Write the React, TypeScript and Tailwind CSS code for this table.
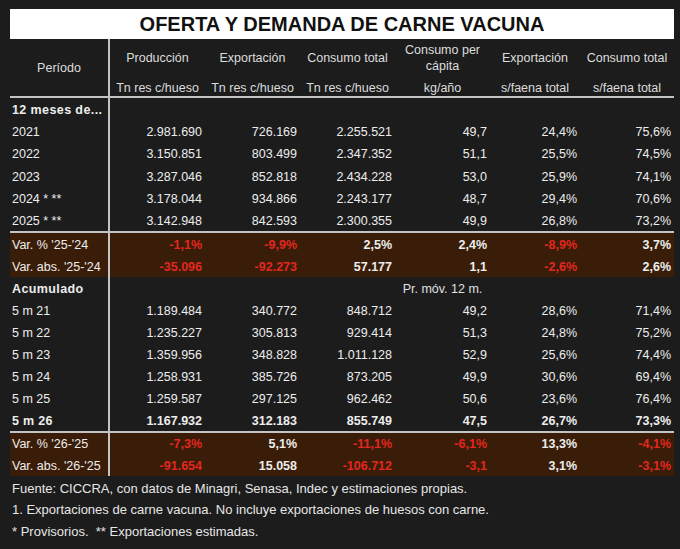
const FONT = { fontFamily: '"Liberation Sans", Arial, sans-serif' };

type Cell = { v: string; red?: boolean };
type Row = { label: string; cells: Cell[]; bold?: boolean; tone?: "var" };

const c = (v: string, red = false): Cell => ({ v, red });

const cols = "grid grid-cols-[100px_95px_95px_95px_95px_90px_94px]";

const years: Row[] = [
  { label: "2021", cells: [c("2.981.690"), c("726.169"), c("2.255.521"), c("49,7"), c("24,4%"), c("75,6%")] },
  { label: "2022", cells: [c("3.150.851"), c("803.499"), c("2.347.352"), c("51,1"), c("25,5%"), c("74,5%")] },
  { label: "2023", cells: [c("3.287.046"), c("852.818"), c("2.434.228"), c("53,0"), c("25,9%"), c("74,1%")] },
  { label: "2024 * **", cells: [c("3.178.044"), c("934.866"), c("2.243.177"), c("48,7"), c("29,4%"), c("70,6%")] },
  { label: "2025 * **", cells: [c("3.142.948"), c("842.593"), c("2.300.355"), c("49,9"), c("26,8%"), c("73,2%")] },
];

const yearVar: Row[] = [
  { label: "Var. % '25-'24", bold: true, tone: "var", cells: [c("-1,1%", true), c("-9,9%", true), c("2,5%"), c("2,4%"), c("-8,9%", true), c("3,7%")] },
  { label: "Var. abs. '25-'24", bold: true, tone: "var", cells: [c("-35.096", true), c("-92.273", true), c("57.177"), c("1,1"), c("-2,6%", true), c("2,6%")] },
];

const months: Row[] = [
  { label: "5 m 21", cells: [c("1.189.484"), c("340.772"), c("848.712"), c("49,2"), c("28,6%"), c("71,4%")] },
  { label: "5 m 22", cells: [c("1.235.227"), c("305.813"), c("929.414"), c("51,3"), c("24,8%"), c("75,2%")] },
  { label: "5 m 23", cells: [c("1.359.956"), c("348.828"), c("1.011.128"), c("52,9"), c("25,6%"), c("74,4%")] },
  { label: "5 m 24", cells: [c("1.258.931"), c("385.726"), c("873.205"), c("49,9"), c("30,6%"), c("69,4%")] },
  { label: "5 m 25", cells: [c("1.259.587"), c("297.125"), c("962.462"), c("50,6"), c("23,6%"), c("76,4%")] },
  { label: "5 m 26", bold: true, cells: [c("1.167.932"), c("312.183"), c("855.749"), c("47,5"), c("26,7%"), c("73,3%")] },
];

const monthVar: Row[] = [
  { label: "Var. % '26-'25", bold: true, tone: "var", cells: [c("-7,3%", true), c("5,1%"), c("-11,1%", true), c("-6,1%", true), c("13,3%"), c("-4,1%", true)] },
  { label: "Var. abs. '26-'25", bold: true, tone: "var", cells: [c("-91.654", true), c("15.058"), c("-106.712", true), c("-3,1", true), c("3,1%"), c("-3,1%", true)] },
];

function DataRow({ row, h = "h-[22px]" }: { row: Row; h?: string }) {
  return (
    <div className={`${cols} ${h} ${row.tone === "var" ? "bg-[#3a1d08]" : ""}`}>
      <div
        className={`flex items-end pb-[3px] pl-[2px] border-r-2 border-[#c4c4c4] leading-[14px] text-[#ededed] ${
          row.bold && row.tone !== "var" ? "font-bold tracking-[0.3px]" : ""
        }`}
      >
        {row.label}
      </div>
      {row.cells.map((cell, i) => (
        <div
          key={i}
          className={`flex items-end justify-end pb-[3px] pr-[3px] leading-[14px] ${
            row.bold ? "font-bold" : ""
          } ${cell.red ? "text-[#e2271f]" : "text-[#ededed]"}`}
        >
          {cell.v}
        </div>
      ))}
    </div>
  );
}

function SectionRow({ label, note }: { label: string; note?: string }) {
  return (
    <div className={`${cols} h-[22px]`}>
      <div className="flex items-end pb-[3px] pl-[2px] border-r-2 border-[#c4c4c4] leading-[14px] font-bold tracking-[0.4px] text-[#ededed]">
        {label}
      </div>
      <div />
      <div />
      <div />
      <div className="flex items-end justify-center pb-[3px] leading-[14px] text-[#e0e0e0] whitespace-nowrap">
        {note}
      </div>
      <div />
      <div />
    </div>
  );
}

export default function App() {
  const heads = [
    ["Producción", "Tn res c/hueso"],
    ["Exportación", "Tn res c/hueso"],
    ["Consumo total", "Tn res c/hueso"],
    ["Consumo per cápita", "kg/año"],
    ["Exportación", "s/faena total"],
    ["Consumo total", "s/faena total"],
  ];

  return (
    <div className="w-[680px] h-[549px] bg-[#1c1c1c] pt-[9px] px-[10px] text-[12.5px]" style={FONT}>
      <div className="w-[664px]">
        <div className="h-[30px] bg-white flex items-center justify-center text-[20px] font-bold text-[#111] leading-none">
          OFERTA Y DEMANDA DE CARNE VACUNA
        </div>

        {/* header */}
        <div className={`${cols} border-b-2 border-[#c4c4c4]`}>
          <div className="row-span-2 flex items-center justify-center border-r-2 border-[#c4c4c4] text-[#dcdcdc] pt-[2px]">
            Período
          </div>
          {heads.map(([t], i) => (
            <div key={i} className="h-[36px] flex items-center justify-center text-center leading-[16px] text-[#dcdcdc] px-[6px] pt-[1px]">
              {t}
            </div>
          ))}
          {heads.map(([, u], i) => (
            <div key={i} className="h-[21px] flex items-end justify-center pb-[1px] leading-[14px] text-[#dcdcdc] whitespace-nowrap">
              {u}
            </div>
          ))}
        </div>

        <SectionRow label="12 meses de..." />
        {years.map((r) => (
          <DataRow key={r.label} row={r} h="h-[22.2px]" />
        ))}
        <div className="h-[2px] bg-[#c4c4c4]" />
        {yearVar.map((r) => (
          <DataRow key={r.label} row={r} />
        ))}
        <SectionRow label="Acumulado" note="Pr. móv. 12 m." />
        {months.map((r) => (
          <DataRow key={r.label} row={r} />
        ))}
        <div className="h-[2px] bg-[#c4c4c4]" />
        {monthVar.map((r) => (
          <DataRow key={r.label} row={r} h="h-[21.5px]" />
        ))}

        <div className="pl-[2px] pt-[2px] text-[13px] leading-[21.5px] text-[#e6e6e6]">
          <div>Fuente: CICCRA, con datos de Minagri, Senasa, Indec y estimaciones propias.</div>
          <div>1. Exportaciones de carne vacuna. No incluye exportaciones de huesos con carne.</div>
          <div>* Provisorios.&nbsp; ** Exportaciones estimadas.</div>
        </div>
      </div>
    </div>
  );
}
